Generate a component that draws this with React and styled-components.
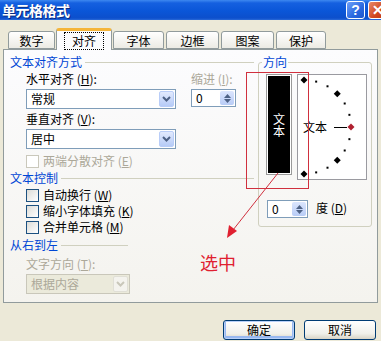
import styled, { createGlobalStyle } from "styled-components";

const Global = createGlobalStyle`
  body { margin: 0; }
  * { box-sizing: border-box; }
`;

const Window = styled.div`
  width: 381px;
  height: 341px;
  overflow: hidden;
  background: #ece9d8;
  font-family: "Noto Sans CJK SC", "Liberation Sans", sans-serif;
  font-size: 12px;
  color: #000;
`;

const TitleBar = styled.div`
  height: 20px;
  display: flex;
  align-items: center;
  justify-content: space-between;
  padding-left: 2px;
  background: linear-gradient(#3d88f0 0%, #1560e0 15%, #0a56d8 55%, #0c4fcc 90%, #2a6ad8 100%);
`;

const Title = styled.div`
  color: #fff;
  font-size: 14px;
  font-weight: bold;
  line-height: 20px;
  letter-spacing: -0.5px;
  text-shadow: 1px 1px 0 #0a2a80;
`;

const TitleButtons = styled.div`
  display: flex;
  gap: 3px;
  margin-right: -6px;
  align-self: flex-start;
  margin-top: 1px;
`;

const CapButton = styled.div`
  width: 19px;
  height: 18px;
  border: 1px solid #fff;
  border-radius: 3px;
  display: flex;
  align-items: center;
  justify-content: center;
  color: #fff;
  font-family: "Liberation Sans", sans-serif;
  font-weight: bold;
  font-size: 14px;
  background: ${(p) =>
    p.$red
      ? "linear-gradient(135deg, #e88a6a, #d0461e 60%, #c03a10)"
      : "linear-gradient(135deg, #6fa0f8, #2a68e0 60%, #1e56cc)"};
`;

const TabRow = styled.div`
  display: flex;
  align-items: flex-end;
  height: 21px;
  margin-top: 8px;
  padding-left: 8px;
  position: relative;
  z-index: 1;
`;

const Tab = styled.div`
  width: ${(p) => p.$w}px;
  height: ${(p) => (p.$active ? 22 : 18)}px;
  margin-right: ${(p) => p.$gap}px;
  border: 1px solid #919b9c;
  border-bottom: ${(p) => (p.$active ? "none" : "1px solid #919b9c")};
  border-top: ${(p) => (p.$active ? "3px solid #f5b53a" : "1px solid #919b9c")};
  border-radius: 3px 3px 0 0;
  background: ${(p) => (p.$active ? "#fcfcfe" : "linear-gradient(#ffffff, #ecebe4)")};
  display: flex;
  align-items: center;
  justify-content: center;
  line-height: 14px;
  padding-top: ${(p) => (p.$active ? 0 : 1)}px;
  margin-bottom: ${(p) => (p.$active ? -1 : 0)}px;
`;

const Focus = styled.span`
  outline: 1px dotted #000;
  outline-offset: 1px;
  padding: 0 6px;
`;

const Panel = styled.div`
  position: relative;
  margin: 0 3px;
  height: 254px;
  border: 1px solid #919b9c;
  background: linear-gradient(#fcfcfe, #f4f3ee);
  display: flex;
  padding: 5px 5px 0 6px;
`;

const LeftCol = styled.div`
  width: 244px;
  display: flex;
  flex-direction: column;
`;

const GroupHeader = styled.div`
  display: flex;
  align-items: center;
  gap: 3px;
  height: 14px;
  line-height: 14px;
  color: #0046d5;
  margin-top: ${(p) => p.$top || 0}px;
  width: ${(p) => p.$w || 244}px;
  &::after {
    content: "";
    flex: 1;
    height: 1px;
    background: #d0d0bf;
  }
`;

const Indent = styled.div`
  padding-left: 16px;
  display: flex;
  flex-direction: ${(p) => (p.$row ? "row" : "column")};
  margin-top: ${(p) => p.$top || 0}px;
`;

const Stack = styled.div`
  display: flex;
  flex-direction: column;
  width: ${(p) => p.$w}px;
  margin-left: ${(p) => p.$left || 0}px;
`;

const Label = styled.div`
  height: 14px;
  line-height: 14px;
  margin-top: ${(p) => p.$top || 0}px;
  color: ${(p) => (p.$disabled ? "#aca899" : "#000")};
  white-space: nowrap;
`;

const Field = styled.div`
  height: ${(p) => p.$h || 20}px;
  width: ${(p) => p.$w}px;
  margin-top: ${(p) => p.$top || 3}px;
  border: 1px solid ${(p) => (p.$disabled ? "#c9c7ba" : "#7f9db9")};
  background: ${(p) => (p.$disabled ? "#ebeadb" : "#fff")};
  color: ${(p) => (p.$disabled ? "#aca899" : "#000")};
  display: flex;
  align-items: center;
  justify-content: space-between;
  padding: 1px 1px 1px 4px;
  line-height: 14px;
`;

const DropBtn = styled.div`
  width: 15px;
  height: 16px;
  border-radius: 2px;
  border: 1px solid ${(p) => (p.$disabled ? "#e0dfd6" : "#b9cdf8")};
  background: ${(p) => (p.$disabled ? "#f4f3ee" : "linear-gradient(#e2eafe, #b6cbf7)")};
  display: flex;
  align-items: center;
  justify-content: center;
`;

const SpinBtn = styled.div`
  width: 14px;
  height: 14px;
  border-radius: 2px;
  background: linear-gradient(#dbe5fd, #b8ccf6);
  display: flex;
  flex-direction: column;
  align-items: center;
  justify-content: center;
  gap: 1px;
`;

const CheckRow = styled.div`
  display: flex;
  align-items: center;
  gap: 4px;
  height: ${(p) => p.$h || 16}px;
  margin-top: ${(p) => p.$top || 0}px;
  color: ${(p) => (p.$disabled ? "#aca899" : "#000")};
  line-height: 14px;
`;

const Box = styled.span`
  width: 13px;
  height: 13px;
  border: 1px solid ${(p) => (p.$disabled ? "#cac8bb" : "#1c5180")};
  background: ${(p) => (p.$disabled ? "#fff" : "linear-gradient(135deg, #dcdcd7, #fff)")};
`;

const Direction = styled.fieldset`
  margin: 0 0 0 4px;
  padding: 0;
  width: 115px;
  height: 172px;
  border: 1px solid #d0d0bf;
  border-radius: 3px;
  min-width: 0;
`;

const Legend = styled.legend`
  color: #0046d5;
  line-height: 14px;
  padding: 0 1px;
  margin-left: 3px;
`;

const DialRow = styled.div`
  display: flex;
  gap: 5px;
  margin: 5px 0 0 7px;
`;

const VerticalFrame = styled.div`
  width: 26px;
  height: 101px;
  border: 1px solid #9a9a9a;
  padding: 1px;
  background: #fff;
`;

const VerticalText = styled.div`
  width: 100%;
  height: 100%;
  background: #000;
  color: #fff;
  display: flex;
  flex-direction: column;
  align-items: center;
  justify-content: center;
  line-height: 12px;
`;

const Dial = styled.div`
  position: relative;
  width: 70px;
  height: 106px;
  border: 1px solid #9a9aa0;
  background: #fff;
`;

const DialText = styled.div`
  position: absolute;
  left: 5px;
  top: 45px;
  line-height: 14px;
`;

const DegreeRow = styled.div`
  display: flex;
  align-items: center;
  gap: 8px;
  margin: 17px 0 0 8px;
  line-height: 14px;
`;

const Footer = styled.div`
  display: flex;
  justify-content: flex-end;
  gap: 9px;
  padding-right: 5px;
  margin-top: 17px;
`;

const Button = styled.div`
  width: 72px;
  height: 20px;
  border: 1px solid #003c74;
  border-radius: 3px;
  background: linear-gradient(#ffffff, #f0f0ea 70%, #d8d4c6);
  box-shadow: ${(p) => (p.$default ? "inset 0 0 0 1px #b8d0f8, inset 0 -1px 0 2px #98b8f0" : "none")};
  display: flex;
  align-items: center;
  justify-content: center;
  line-height: 14px;
`;

const RedBox = styled.div`
  position: absolute;
  left: 242px;
  top: 22px;
  width: 63px;
  height: 117px;
  border: 1px solid #d0303e;
  pointer-events: none;
`;

const Arrow = styled.svg`
  position: absolute;
  left: 220px;
  top: 120px;
  pointer-events: none;
`;

const Note = styled.div`
  position: absolute;
  left: 196px;
  top: 201px;
  color: #e02030;
  font-size: 18px;
  line-height: 22px;
`;

const Chevron = ({ color = "#4d6185" }) => (
  <svg width="9" height="6" viewBox="0 0 9 6">
    <path d="M1 1 L4.5 4.5 L8 1" fill="none" stroke={color} strokeWidth="2" />
  </svg>
);

const Select = ({ value, w, disabled, top }) => (
  <Field $w={w} $disabled={disabled} $top={top}>
    <span>{value}</span>
    <DropBtn $disabled={disabled}>
      <Chevron color={disabled ? "#c9c7ba" : "#4d6185"} />
    </DropBtn>
  </Field>
);

const Spin = ({ w }) => (
  <Field $w={w} $h={18}>
    <span>0</span>
    <SpinBtn>
      <svg width="7" height="4" viewBox="0 0 7 4">
        <path d="M0 4 L3.5 0 L7 4 Z" fill="#4d6185" />
      </svg>
      <svg width="7" height="4" viewBox="0 0 7 4">
        <path d="M0 0 L3.5 4 L7 0 Z" fill="#4d6185" />
      </svg>
    </SpinBtn>
  </Field>
);

const DialMarks = () => {
  const cx = 6;
  const cy = 52;
  const r = 47;
  const marks = [];
  for (let a = -90; a <= 90; a += 15) {
    const rad = (a * Math.PI) / 180;
    const x = cx + r * Math.cos(rad);
    const y = cy + r * Math.sin(rad);
    if (a % 45 === 0) {
      const s = 3.5;
      marks.push(
        <path
          key={a}
          d={`M${x} ${y - s} L${x + s} ${y} L${x} ${y + s} L${x - s} ${y} Z`}
          fill={a === 0 ? "#b02030" : "#000"}
        />
      );
    } else {
      marks.push(<rect key={a} x={x - 1} y={y - 1} width="2" height="2" fill="#000" />);
    }
  }
  return (
    <svg width="68" height="104" viewBox="0 0 68 104" style={{ position: "absolute", left: 0, top: 0 }}>
      {marks}
      <line x1="36" y1="52.5" x2="49" y2="52.5" stroke="#000" strokeWidth="1" />
    </svg>
  );
};

const tabs = [
  { t: "数字", w: 47, gap: 1 },
  { t: "对齐", w: 56, gap: 1, active: true },
  { t: "字体", w: 51, gap: 2 },
  { t: "边框", w: 53, gap: 2 },
  { t: "图案", w: 53, gap: 2 },
  { t: "保护", w: 50, gap: 0 },
];

export default function App() {
  return (
    <Window>
      <Global />
      <TitleBar>
        <Title>单元格格式</Title>
        <TitleButtons>
          <CapButton>?</CapButton>
          <CapButton $red>✕</CapButton>
        </TitleButtons>
      </TitleBar>

      <TabRow>
        {tabs.map((tb) => (
          <Tab key={tb.t} $w={tb.w} $gap={tb.gap} $active={tb.active}>
            {tb.active ? <Focus>{tb.t}</Focus> : tb.t}
          </Tab>
        ))}
      </TabRow>

      <Panel>
        <LeftCol>
          <GroupHeader>文本对齐方式</GroupHeader>
          <Indent $row>
            <Stack $w={150}>
              <Label $top={3}>
                水平对齐 (<u>H</u>):
              </Label>
              <Select value="常规" w={150} />
              <Label $top={3}>
                垂直对齐 (<u>V</u>):
              </Label>
              <Select value="居中" w={150} />
            </Stack>
            <Stack $w={45} $left={15}>
              <Label $top={3} $disabled>
                缩进 (<u>I</u>):
              </Label>
              <Spin w={45} />
            </Stack>
          </Indent>
          <Indent $top={5}>
            <CheckRow $disabled $h={14}>
              <Box $disabled />
              <span>
                两端分散对齐 (<u>E</u>)
              </span>
            </CheckRow>
          </Indent>
          <GroupHeader $top={3}>文本控制</GroupHeader>
          <Indent $top={2}>
            <CheckRow>
              <Box />
              <span>
                自动换行 (<u>W</u>)
              </span>
            </CheckRow>
            <CheckRow>
              <Box />
              <span>
                缩小字体填充 (<u>K</u>)
              </span>
            </CheckRow>
            <CheckRow>
              <Box />
              <span>
                合并单元格 (<u>M</u>)
              </span>
            </CheckRow>
          </Indent>
          <GroupHeader $top={3} $w={118}>
            从右到左
          </GroupHeader>
          <Indent>
            <Label $top={5} $disabled>
              文字方向 (<u>T</u>):
            </Label>
            <Select value="根据内容" w={104} disabled />
          </Indent>
        </LeftCol>

        <Direction>
          <Legend>方向</Legend>
          <DialRow>
            <VerticalFrame>
              <VerticalText>
                <span>文</span>
                <span>本</span>
              </VerticalText>
            </VerticalFrame>
            <Dial>
              <DialMarks />
              <DialText>文本</DialText>
            </Dial>
          </DialRow>
          <DegreeRow>
            <Spin w={41} />
            <span>
              度 (<u>D</u>)
            </span>
          </DegreeRow>
        </Direction>

        <RedBox />
        <Arrow width="65" height="75" viewBox="0 0 65 75">
          <line x1="54" y1="3" x2="9" y2="60" stroke="#d0303e" strokeWidth="1" />
          <path d="M3 68 L5 55 L13 61 Z" fill="#e02030" />
        </Arrow>
        <Note>选中</Note>
      </Panel>

      <Footer>
        <Button $default>确定</Button>
        <Button>取消</Button>
      </Footer>
    </Window>
  );
}
